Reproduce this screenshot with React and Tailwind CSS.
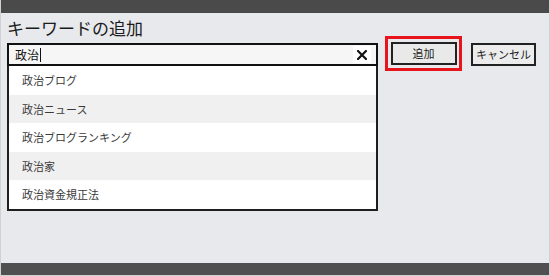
import React from 'react';

const suggestions = ['政治ブログ', '政治ニュース', '政治ブログランキング', '政治家', '政治資金規正法'];

const App = () => {
    return (
        <div
            className="w-[550px] h-[276px] flex flex-col bg-[#e7e9ec] border-x border-b border-[#cfd1d4] overflow-hidden"
            style={{ fontFamily: '"Noto Sans CJK JP", "Noto Sans", sans-serif' }}
        >
            {/* top bar */}
            <div className="h-[13px] shrink-0 bg-[#4a4a4a]" />

            <div className="flex-1 px-[6px]">
                <h1 className="mt-[3px] text-[17px] leading-[24px] font-normal text-[#1b1b1b]">
                    キーワードの追加
                </h1>

                <div className="flex items-start">
                    {/* search box + dropdown */}
                    <div className="w-[371px] mt-[3px]">
                        <div className="h-[23px] border-2 border-[#111] bg-[#f6f6f6] flex items-center pl-[6px] pr-[5px]">
                            <span className="text-[12px] leading-none text-[#111]">政治</span>
                            <span className="w-px h-[14px] bg-[#111] ml-px" />
                            <span className="ml-auto flex items-center justify-center w-[18px] h-[17px] bg-white">
                                <svg width="10" height="10" viewBox="0 0 10 10">
                                    <path d="M1 1 L9 9 M9 1 L1 9" stroke="#111" strokeWidth="2.2" strokeLinecap="square" />
                                </svg>
                            </span>
                        </div>
                        <div className="bg-white border-x-2 border-b-2 border-[#1e1e1e]">
                            {suggestions.map((s, i) => (
                                <div
                                    key={s}
                                    className={`h-[28.6px] flex items-center pl-[13px] text-[11px] text-[#3a3a3a] ${i % 2 === 1 ? 'bg-[#f1f0f0]' : 'bg-white'}`}
                                >
                                    {s}
                                </div>
                            ))}
                        </div>
                    </div>

                    {/* add button, highlighted */}
                    <div className="ml-[7px] mt-[-4px] w-[77px] h-[35px] border-[3px] border-[#e8141c] flex items-center justify-center">
                        <button className="w-[66px] h-[23px] border-2 border-[#222] bg-[#e9e9e9] text-[11px] text-[#222] flex items-center justify-center">
                            追加
                        </button>
                    </div>

                    {/* cancel */}
                    <button className="ml-[9px] mt-[3px] w-[65px] h-[23px] border-2 border-[#222] bg-[#ececec] text-[11px] text-[#222] flex items-center justify-center">
                        キャンセル
                    </button>
                </div>
            </div>

            {/* bottom bar */}
            <div className="h-[12px] shrink-0 bg-[#505050]" />
        </div>
    );
};

export default App;
